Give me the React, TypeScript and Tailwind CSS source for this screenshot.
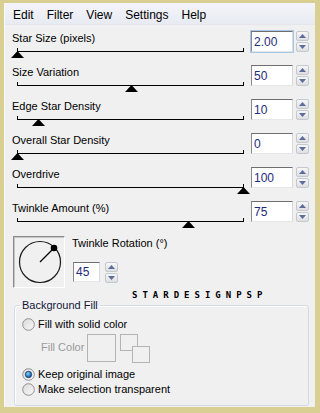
import React from 'react';

const rows = [
  { label: 'Star Size (pixels)', value: '2.00', pos: 0, focused: true },
  { label: 'Size Variation', value: '50', pos: 0.504 },
  { label: 'Edge Star Density', value: '10', pos: 0.093 },
  { label: 'Overall Star Density', value: '0', pos: 0 },
  { label: 'Overdrive', value: '100', pos: 1 },
  { label: 'Twinkle Amount (%)', value: '75', pos: 0.757 },
];

const font = { fontFamily: '"Liberation Sans", Arial, sans-serif' };

const Arrow = ({ up }: { up?: boolean }) => (
  <svg width="7" height="4" viewBox="0 0 7 4">
    <polygon points={up ? '3.5,0 7,4 0,4' : '0,0 7,0 3.5,4'} fill="#5b6d9c" />
  </svg>
);

const Spin = () => (
  <div className="flex h-[21px] w-[13px] flex-col gap-px">
    <div className="flex flex-1 items-center justify-center rounded-[2px] border border-[#c4c8d0] bg-gradient-to-b from-[#f7f7f7] to-[#dedede]">
      <Arrow up />
    </div>
    <div className="flex flex-1 items-center justify-center rounded-[2px] border border-[#c4c8d0] bg-gradient-to-b from-[#f7f7f7] to-[#dedede]">
      <Arrow />
    </div>
  </div>
);

const SpinBox = ({ value, width, focused }: { value: string; width: number; focused?: boolean }) => (
  <div className="flex gap-[3px]">
    <div
      className={`flex h-[21px] items-center border border-t-[#6f6f6f] border-l-[#8a8a8a] border-r-[#d9d9d9] border-b-[#e6e6e6] bg-white pl-[2px] text-[12px] text-[#1f2a7c] ${
        focused ? 'outline outline-1 outline-[#a8c6ea]' : ''
      }`}
      style={{ width }}
    >
      {value}
    </div>
    <Spin />
  </div>
);

const Slider = ({ pos }: { pos: number }) => (
  <div className="relative ml-[5px] mt-[3px] w-[227px]">
    <div className="h-[4px] border-x border-b border-black" />
    <svg
      className="absolute top-[3px]"
      style={{ left: Math.round(pos * 226) - 6 }}
      width="13"
      height="7"
      viewBox="0 0 13 7"
    >
      <polygon points="6.5,0 13,7 0,7" fill="#000" />
    </svg>
  </div>
);

const Radio = ({ checked }: { checked?: boolean }) => (
  <svg width="13" height="13" viewBox="0 0 13 13">
    <defs>
      <linearGradient id={checked ? 'rg1' : 'rg0'} x1="0" y1="0" x2="1" y2="1">
        <stop offset="0" stopColor="#d8d8d8" />
        <stop offset="1" stopColor="#fbfbfb" />
      </linearGradient>
      <radialGradient id="dot" cx="0.4" cy="0.35" r="0.7">
        <stop offset="0" stopColor="#8fd0f6" />
        <stop offset="0.6" stopColor="#2a7cc4" />
        <stop offset="1" stopColor="#164e86" />
      </radialGradient>
    </defs>
    <circle cx="6.5" cy="6.5" r="5.8" fill={`url(#${checked ? 'rg1' : 'rg0'})`} stroke="#8d8f93" strokeWidth="1" />
    {checked && <circle cx="6.5" cy="6.5" r="3.2" fill="url(#dot)" stroke="#1d3f66" strokeWidth="0.8" />}
  </svg>
);

export default function App() {
  return (
    <div
      className="h-[413px] w-[320px] bg-[#d9cf93] pb-[6px] pl-[4px] pr-[5px] pt-[3px] text-black"
      style={font}
    >
      <div className="flex h-[404px] flex-col border-l border-[#fafaf4] bg-[#f0f0f0] pb-[1px]">
        {/* menu */}
        <div className="flex h-[22px] gap-[13px] border-b border-[#e4e6ec] bg-gradient-to-b from-[#f4f5fa] to-[#e9ebf3] pl-[8px] pt-[5px] text-[12px] leading-[14px]">
          <span>Edit</span>
          <span>Filter</span>
          <span>View</span>
          <span>Settings</span>
          <span>Help</span>
        </div>

        {/* slider rows */}
        <div className="flex flex-col pl-[7px] pt-[4px]">
          {rows.map((r) => (
            <div key={r.label} className="flex h-[34px]">
              <div className="w-[235px] pt-[3px]">
                <div className="text-[11px] leading-[13px]">{r.label}</div>
                <Slider pos={r.pos} />
              </div>
              <div className="ml-[4px] mt-[2px]">
                <SpinBox value={r.value} width={42} focused={r.focused} />
              </div>
            </div>
          ))}
        </div>

        {/* twinkle rotation */}
        <div className="ml-[8px] mt-[3px] flex">
          <div className="h-[52px] w-[52px] border border-b-white border-l-[#8a8a8a] border-r-white border-t-[#8a8a8a] shadow-[inset_1px_1px_0_#c6c6c6]">
            <svg width="50" height="50" viewBox="0 0 50 50">
              <circle cx="26" cy="25" r="20.5" fill="none" stroke="#1a1a1a" strokeWidth="1.2" />
              <line x1="26" y1="25" x2="40" y2="11" stroke="#000" strokeWidth="1.3" />
              <circle cx="40" cy="11" r="3.3" fill="#000" />
            </svg>
          </div>
          <div className="ml-[7px] flex flex-col">
            <div className="mt-[1px] text-[11px] leading-[13px]">Twinkle Rotation (°)</div>
            <div className="ml-[1px] mt-[12px] flex gap-[5px]">
              <div className="flex h-[20px] w-[27px] items-center border border-b-[#e6e6e6] border-l-[#8a8a8a] border-r-[#d9d9d9] border-t-[#6f6f6f] bg-white pl-[2px] text-[12px] text-[#1f2a7c]">
                45
              </div>
              <Spin />
            </div>
          </div>
        </div>

        {/* watermark */}
        <div
          className="ml-[127px] mt-[4px] h-[7px] text-[9px] font-bold leading-[7px] tracking-[5px]"
          style={{ fontFamily: '"DejaVu Sans Mono", monospace' }}
        >
          STARDESIGNPSP
        </div>

        {/* background fill group */}
        <fieldset className="ml-[9px] mr-[6px] flex-1 rounded-[3px] border border-[#d3dbe3] pl-[7px] shadow-[inset_1px_1px_0_#ffffff]">
          <legend className="-ml-[2px] px-[2px] text-[11px] leading-[13px] text-[#10163a]">Background Fill</legend>
          <div className="mt-[5px] flex h-[14px] items-center gap-[3px] text-[11px]">
            <Radio />
            <span>Fill with solid color</span>
          </div>
          <div className="mt-[3px] flex h-[29px] items-start">
            <span className="ml-[19px] mt-[7px] text-[11px] leading-[13px] text-[#9a9a9a]">Fill Color</span>
            <div className="ml-[3px] h-[28px] w-[29px] border border-[#b4b4b4]" />
            <div className="relative ml-[4px] h-[29px] w-[30px]">
              <div className="h-[17px] w-[18px] border border-[#b4b4b4]" />
              <div className="absolute left-[12px] top-[12px] h-[17px] w-[18px] border border-[#b4b4b4] bg-[#f0f0f0]" />
            </div>
          </div>
          <div className="mt-[4px] flex h-[14px] items-center gap-[3px] text-[11px]">
            <Radio checked />
            <span>Keep original image</span>
          </div>
          <div className="mt-[1px] flex h-[14px] items-center gap-[3px] text-[11px]">
            <Radio />
            <span>Make selection transparent</span>
          </div>
        </fieldset>
      </div>
    </div>
  );
}
